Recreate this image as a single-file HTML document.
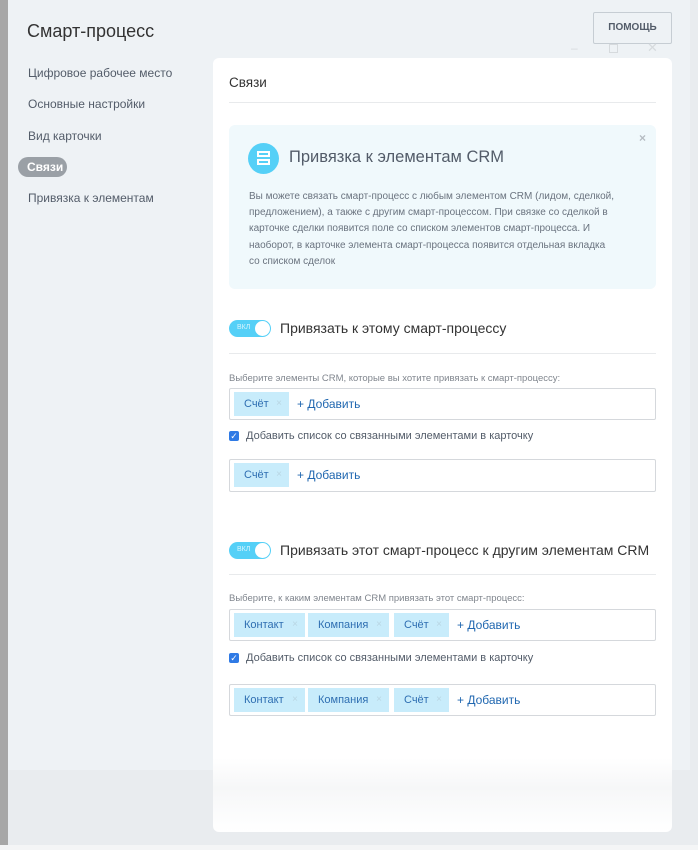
<!DOCTYPE html>
<html><head><meta charset="utf-8"><style>
*{margin:0;padding:0;box-sizing:border-box}
body{width:698px;height:850px;overflow:hidden;position:relative;background:#e9ecef;font-family:"Liberation Sans",sans-serif;color:#535c69}
.a{position:absolute;white-space:nowrap}
.strip{position:absolute;left:0;top:0;width:8px;height:850px;background:#a7a7a7}
.main{position:absolute;left:8px;top:0;width:682px;height:770px;background:#eef2f5}
.card{position:absolute;left:213px;top:58px;width:459px;height:774px;border-radius:6px;background:linear-gradient(#fff 0,#fff 700px,#f6f7f8 730px,#fff 774px)}
.hr{position:absolute;height:1px;background:#e8eaec}
.box{position:absolute;left:229px;width:427px;border:1px solid #d5d8dc;border-radius:2px;background:#fff}
.tag{position:absolute;top:3px;height:24px;background:#c8ecfb;color:#2f6fb2;font-size:11px;line-height:24px;padding-left:10px}
.tag i{position:absolute;right:7px;font-style:normal;color:#b9d6e3;font-size:10px}
.add{position:absolute;top:0;line-height:30px;font-size:12px;color:#2067b0}
.tg{position:absolute;left:229px;width:42px;height:17px;border-radius:9px;background:#55d0f7}
.tg b{position:absolute;right:1px;top:1px;width:15px;height:15px;border-radius:50%;background:#fff}
.tg span{position:absolute;left:8px;top:4px;font-size:7px;color:#d8f4fd}
.cb{position:absolute;left:229px;width:10px;height:10px;background:#2f7ae5;border-radius:2px;color:#fff;font-size:9px;line-height:10px;text-align:center}
</style></head><body>
<div class="strip"></div>
<div class="main"></div>
<div class="a" style="left:27px;top:21px;font-size:18px;color:#333">Смарт-процесс</div>
<div class="a" style="left:593px;top:12px;width:79px;height:32px;border:1px solid #c6cdd3;border-radius:2px;font-size:10px;font-weight:bold;line-height:30px;text-align:center;color:#535c69">ПОМОЩЬ</div>
<div class="a" style="left:571px;top:41px;font-size:12px;color:#d6dadd">–</div>
<div class="a" style="left:609px;top:44px;width:9px;height:9px;border:1px solid #d6dadd"></div>
<div class="a" style="left:647px;top:40px;font-size:13px;color:#d6dadd">✕</div>
<div class="a" style="left:28px;top:66px;font-size:12px">Цифровое рабочее место</div>
<div class="a" style="left:28px;top:97px;font-size:12px">Основные настройки</div>
<div class="a" style="left:28px;top:129px;font-size:12px">Вид карточки</div>
<div class="a" style="left:18px;top:157px;width:49px;height:20px;border-radius:10px;background:#9aa0a6;color:#fff;font-weight:bold;font-size:12px;line-height:20px;padding-left:9px">Связи</div>
<div class="a" style="left:28px;top:191px;font-size:12px">Привязка к элементам</div>
<div class="card"></div>
<div class="a" style="left:229px;top:75px;font-size:13.5px;color:#333">Связи</div>
<div class="hr" style="left:229px;top:102px;width:427px"></div>
<div class="a" style="left:229px;top:125px;width:427px;height:164px;background:#f0f9fc;border-radius:6px"></div>
<div class="a" style="left:639px;top:131px;font-size:12px;color:#b5bcc2;font-weight:bold">×</div>
<div class="a" style="left:248px;top:143px;width:31px;height:31px;border-radius:50%;background:#55d0f7"></div>
<div class="a" style="left:257px;top:151px;width:13px;height:6px;border:2px solid #fff"></div>
<div class="a" style="left:257px;top:159px;width:13px;height:6px;border:2px solid #fff"></div>
<div class="a" style="left:289px;top:148px;font-size:16.5px;color:#535c69">Привязка к элементам CRM</div>
<div class="a" style="left:249px;top:189px;font-size:10px;line-height:16.2px;color:#6a737f;white-space:normal;width:390px">Вы можете связать смарт-процесс с любым элементом CRM (лидом, сделкой,<br>предложением), а также с другим смарт-процессом. При связке со сделкой в<br>карточке сделки появится поле со списком элементов смарт-процесса. И<br>наоборот, в карточке элемента смарт-процесса появится отдельная вкладка<br>со списком сделок</div>

<div class="tg" style="top:320px"><span>ВКЛ</span><b></b></div>
<div class="a" style="left:280px;top:320px;font-size:14px;color:#333">Привязать к этому смарт-процессу</div>
<div class="hr" style="left:229px;top:353px;width:427px"></div>
<div class="a" style="left:229px;top:373px;font-size:9.5px;color:#80868e">Выберите элементы CRM, которые вы хотите привязать к смарт-процессу:</div>
<div class="box" style="top:388px;height:32px"><div class="tag" style="left:4px;width:55px">Счёт<i>×</i></div><div class="add" style="left:67px">+ Добавить</div></div>
<div class="cb" style="top:431px">✓</div>
<div class="a" style="left:246px;top:430px;font-size:11px">Добавить список со связанными элементами в карточку</div>
<div class="box" style="top:459px;height:33px"><div class="tag" style="left:4px;width:55px">Счёт<i>×</i></div><div class="add" style="left:67px">+ Добавить</div></div>

<div class="tg" style="top:542px"><span>ВКЛ</span><b></b></div>
<div class="a" style="left:280px;top:542px;font-size:14px;color:#333">Привязать этот смарт-процесс к другим элементам CRM</div>
<div class="hr" style="left:229px;top:574px;width:427px"></div>
<div class="a" style="left:229px;top:593px;font-size:9.5px;color:#80868e">Выберите, к каким элементам CRM привязать этот смарт-процесс:</div>
<div class="box" style="top:609px;height:32px"><div class="tag" style="left:4px;width:71px">Контакт<i>×</i></div><div class="tag" style="left:78px;width:81px">Компания<i>×</i></div><div class="tag" style="left:164px;width:55px">Счёт<i>×</i></div><div class="add" style="left:227px">+ Добавить</div></div>
<div class="cb" style="top:653px">✓</div>
<div class="a" style="left:246px;top:652px;font-size:11px">Добавить список со связанными элементами в карточку</div>
<div class="box" style="top:684px;height:32px"><div class="tag" style="left:4px;width:71px">Контакт<i>×</i></div><div class="tag" style="left:78px;width:81px">Компания<i>×</i></div><div class="tag" style="left:164px;width:55px">Счёт<i>×</i></div><div class="add" style="left:227px">+ Добавить</div></div>
<div class="a" style="left:0;top:845px;width:698px;height:5px;background:#f4f5f6"></div>
</body></html>
